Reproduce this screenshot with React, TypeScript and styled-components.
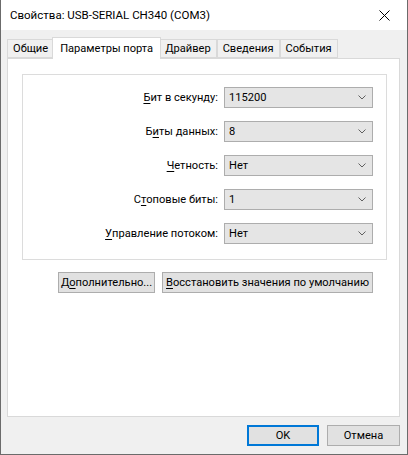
import styled, { createGlobalStyle } from "styled-components";

const GlobalStyle = createGlobalStyle`
  html, body {
    margin: 0;
    padding: 0;
    background: #f0f0f0;
  }
  * {
    box-sizing: border-box;
  }
`;

const FONT = `Roboto, "Noto Sans", "Liberation Sans", sans-serif`;
const SIZE = "11.1px";

const Window = styled.div`
  width: 408px;
  height: 455px;
  display: flex;
  flex-direction: column;
  background: #f0f0f0;
  border-left: 1px solid #6b6b6b;
  border-right: 1px solid #6b6b6b;
  border-bottom: 1px solid #6b6b6b;
  font-family: ${FONT};
  font-size: ${SIZE};
  color: #000;
`;

const TitleBar = styled.div`
  height: 30px;
  flex-shrink: 0;
  display: flex;
  align-items: center;
  justify-content: space-between;
  background: #fff;
  padding-left: 9px;
`;

const Title = styled.span`
  font-size: 11.5px;
  line-height: 16px;
`;

const CloseButton = styled.div`
  width: 46px;
  height: 30px;
  display: flex;
  align-items: center;
  justify-content: center;
`;

const TabStrip = styled.div`
  display: flex;
  align-items: flex-end;
  height: 21px;
  margin: 7px 0 0 6px;
  position: relative;
  z-index: 1;
`;

const Tab = styled.div<{ $active?: boolean }>`
  height: ${(p) => (p.$active ? "22px" : "19px")};
  margin: ${(p) => (p.$active ? "0 -2px -1px -2px" : "0")};
  padding: ${(p) => (p.$active ? "0 7px" : "0 5px")};
  display: flex;
  align-items: center;
  background: ${(p) => (p.$active ? "#fff" : "#f0f0f0")};
  border: 1px solid #d9d9d9;
  border-bottom: ${(p) => (p.$active ? "none" : "1px solid #d9d9d9")};
  position: relative;
  z-index: ${(p) => (p.$active ? 2 : 1)};
  & + & {
    border-left: ${(p) => (p.$active ? "1px solid #d9d9d9" : "none")};
  }
  white-space: nowrap;
`;

const Panel = styled.div`
  height: 359px;
  margin: 0 7px 0 6px;
  background: #fff;
  border: 1px solid #d9d9d9;
  display: flex;
  flex-direction: column;
`;

const GroupBox = styled.div`
  width: 365px;
  height: 186px;
  margin: 15px 0 0 14px;
  border: 1px solid #dcdcdc;
  padding: 12px 0 0 0;
  display: grid;
  grid-template-columns: 195px 149px;
  column-gap: 6px;
  row-gap: 13px;
  align-content: start;
`;

const Label = styled.label`
  display: flex;
  align-items: center;
  justify-content: flex-end;
  height: 21px;
  white-space: nowrap;
`;

const Key = styled.span`
  text-decoration: underline;
  text-underline-offset: 2px;
`;

const Combo = styled.div`
  height: 21px;
  display: flex;
  align-items: center;
  justify-content: space-between;
  padding: 0 6px 0 4px;
  background: #e5e5e5;
  border: 1px solid #adadad;
`;

const ButtonRow = styled.div`
  display: flex;
  justify-content: flex-end;
  gap: 7px;
  margin: 12px 26px 0 0;
`;

const Button = styled.button<{ $width: number; $default?: boolean }>`
  width: ${(p) => p.$width}px;
  height: 21px;
  padding: 0;
  font-family: ${FONT};
  font-size: ${SIZE};
  color: #000;
  background: #e1e1e1;
  border: ${(p) => (p.$default ? "2px solid #0078d7" : "1px solid #adadad")};
  display: flex;
  align-items: center;
  justify-content: center;
  white-space: nowrap;
`;

const Footer = styled.div`
  display: flex;
  justify-content: flex-end;
  gap: 8px;
  margin: 8px 7px 0 0;
`;

const Chevron = () => (
  <svg width="8" height="5" viewBox="0 0 8 5">
    <path d="M0.5 0.5 L4 4 L7.5 0.5" fill="none" stroke="#606060" strokeWidth="1" />
  </svg>
);

const fields: { label: [string, string, string]; value: string }[] = [
  { label: ["", "Б", "ит в секунду:"], value: "115200" },
  { label: ["Б", "и", "ты данных:"], value: "8" },
  { label: ["", "Ч", "етность:"], value: "Нет" },
  { label: ["С", "т", "оповые биты:"], value: "1" },
  { label: ["", "У", "правление потоком:"], value: "Нет" },
];

const tabs = ["Общие", "Параметры порта", "Драйвер", "Сведения", "События"];

export default function App() {
  return (
    <>
      <GlobalStyle />
      <Window>
        <TitleBar>
          <Title>Свойства: USB-SERIAL CH340 (COM3)</Title>
          <CloseButton>
            <svg width="11" height="11" viewBox="0 0 11 11">
              <path d="M0.5 0.5 L10.5 10.5 M10.5 0.5 L0.5 10.5" stroke="#000" strokeWidth="1" />
            </svg>
          </CloseButton>
        </TitleBar>
        <TabStrip>
          {tabs.map((t) => (
            <Tab key={t} $active={t === "Параметры порта"}>
              {t}
            </Tab>
          ))}
        </TabStrip>
        <Panel>
          <GroupBox>
            {fields.map((f) => (
              <>
                <Label key={f.value + f.label[2]}>
                  {f.label[0]}
                  <Key>{f.label[1]}</Key>
                  {f.label[2]}
                </Label>
                <Combo>
                  <span>{f.value}</span>
                  <Chevron />
                </Combo>
              </>
            ))}
          </GroupBox>
          <ButtonRow>
            <Button $width={97}>
              Д<Key>о</Key>полнительно...
            </Button>
            <Button $width={211}>
              <Key>В</Key>осстановить значения по умолчанию
            </Button>
          </ButtonRow>
        </Panel>
        <Footer>
          <Button $width={72} $default>
            OK
          </Button>
          <Button $width={73}>Отмена</Button>
        </Footer>
      </Window>
    </>
  );
}
